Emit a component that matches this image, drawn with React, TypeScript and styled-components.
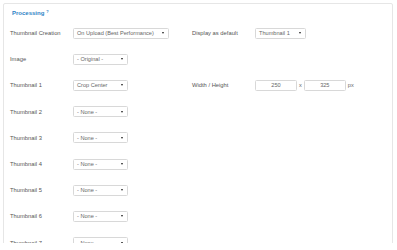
import React from "react";
import styled, { createGlobalStyle } from "styled-components";

const Global = createGlobalStyle`
  html, body { margin: 0; padding: 0; background: #fff; }
  body { font-family: "Liberation Sans", Arial, sans-serif; }
`;

const Page = styled.div`
  height: 243px;
  overflow: hidden;
  padding: 3px 4px 0 3px;
  box-sizing: border-box;
`;

const Panel = styled.div`
  border: 1px solid #e6e6e6;
  border-radius: 2px;
  padding: 0 0 0 6px;
  height: 300px;
  box-sizing: border-box;
`;

const Heading = styled.div`
  height: 15px;
  padding-left: 2px;
  display: flex;
  align-items: center;
  font-size: 6px;
  font-weight: 600;
  color: #2f84c6;
  padding-top: 1px;
  sup {
    font-size: 4px;
    margin-left: 2px;
    position: relative;
    top: -1px;
  }
`;

const Rows = styled.div`
  display: grid;
  grid-auto-rows: 26.2px;
`;

const Row = styled.div`
  display: grid;
  grid-template-columns: 63px 119px 63px auto;
  align-items: center;
`;

const Label = styled.div`
  font-size: 5.8px;
  color: #555;
  white-space: nowrap;
`;

const Select = styled.div<{ $w: number }>`
  width: ${(p) => p.$w}px;
  height: 11px;
  box-sizing: border-box;
  border: 1px solid #d8d8d8;
  border-radius: 1.5px;
  background: #fff;
  display: flex;
  align-items: center;
  justify-content: space-between;
  padding: 0 4px 0 3px;
  font-size: 5.6px;
  color: #666;
  white-space: nowrap;
`;

const Arrow = styled.span`
  width: 0;
  height: 0;
  border-left: 1.5px solid transparent;
  border-right: 1.5px solid transparent;
  border-top: 2.5px solid #222;
`;

const Size = styled.div`
  display: flex;
  align-items: center;
  gap: 2px;
  font-size: 5.6px;
  color: #666;
`;

const Input = styled.div`
  width: 42px;
  height: 11px;
  box-sizing: border-box;
  border: 1px solid #d8d8d8;
  border-radius: 1.5px;
  display: flex;
  align-items: center;
  justify-content: center;
  font-size: 5.6px;
  color: #666;
`;

const Drop = ({ w, text }: { w: number; text: string }) => (
  <Select $w={w}>
    <span>{text}</span>
    <Arrow />
  </Select>
);

const thumbs = [2, 3, 4, 5, 6, 7];

export default function App() {
  return (
    <>
      <Global />
      <Page>
        <Panel>
          <Heading>
            Processing<sup>?</sup>
          </Heading>
          <Rows>
            <Row>
              <Label>Thumbnail Creation</Label>
              <Drop w={96} text="On Upload (Best Performance)" />
              <Label>Display as default</Label>
              <Drop w={51} text="Thumbnail 1" />
            </Row>
            <Row>
              <Label>Image</Label>
              <Drop w={55} text="- Original -" />
            </Row>
            <Row>
              <Label>Thumbnail 1</Label>
              <Drop w={55} text="Crop Center" />
              <Label>Width / Height</Label>
              <Size>
                <Input>250</Input>
                <span>x</span>
                <Input>325</Input>
                <span>px</span>
              </Size>
            </Row>
            {thumbs.map((n) => (
              <Row key={n}>
                <Label>Thumbnail {n}</Label>
                <Drop w={55} text="- None -" />
              </Row>
            ))}
          </Rows>
        </Panel>
      </Page>
    </>
  );
}
